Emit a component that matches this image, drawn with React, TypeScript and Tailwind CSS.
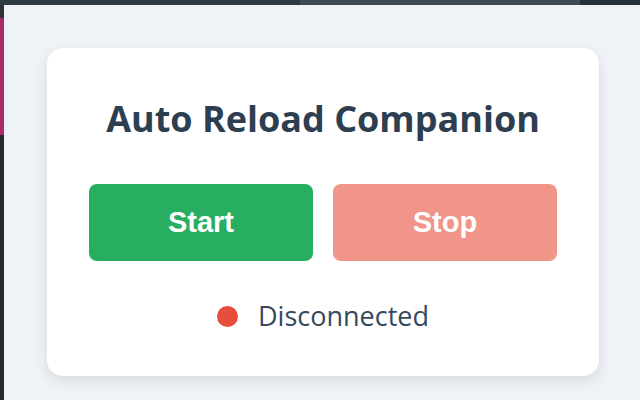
export default function App() {
  return (
    <div className="w-[640px] h-[400px] flex flex-col overflow-hidden bg-[#eff2f7]">
      {/* window edge from the desktop behind */}
      <div className="h-[5px] flex">
        <div className="w-[300px] bg-[#2e3a41]" />
        <div className="flex-1 bg-[#3c4b53]" />
        <div className="w-[60px] bg-[#26313a]" />
      </div>
      <div className="flex flex-1">
        <div className="w-[4px] flex flex-col">
          <div className="h-[13px] bg-[#2b3338]" />
          <div className="h-[117px] bg-[#a82c6a]" />
          <div className="flex-1 bg-[#24292d]" />
        </div>
        <div className="flex-1 pl-[43px] pt-[43px]">
          <div className="w-[552px] h-[328px] bg-white rounded-[16px] shadow-[0_5px_14px_rgba(0,0,0,0.10)] flex flex-col items-center px-[42px] pt-[51px]">
            <h1
              className="text-[36px] leading-[40px] font-bold text-[#2c3e50]"
              style={{ fontFamily: '"Open Sans", "Noto Sans", sans-serif' }}
            >
              Auto Reload Companion
            </h1>
            <div
              className="mt-[45px] w-full grid grid-cols-2 gap-[20px]"
              style={{ fontFamily: '"Liberation Sans", Arial, sans-serif' }}
            >
              <button className="h-[77px] rounded-[8px] bg-[#27ae60] text-white text-[29px] font-bold">
                Start
              </button>
              <button className="h-[77px] rounded-[8px] bg-[#f1948a] text-white text-[29px] font-bold">
                Stop
              </button>
            </div>
            <div
              className="mt-[40px] h-[30px] flex items-center gap-[20px] text-[27px] text-[#34495e]"
              style={{ fontFamily: '"Open Sans", "Noto Sans", sans-serif' }}
            >
              <span className="w-[21px] h-[21px] rounded-full bg-[#e74c3c]" />
              <span>Disconnected</span>
            </div>
          </div>
        </div>
      </div>
    </div>
  );
}
